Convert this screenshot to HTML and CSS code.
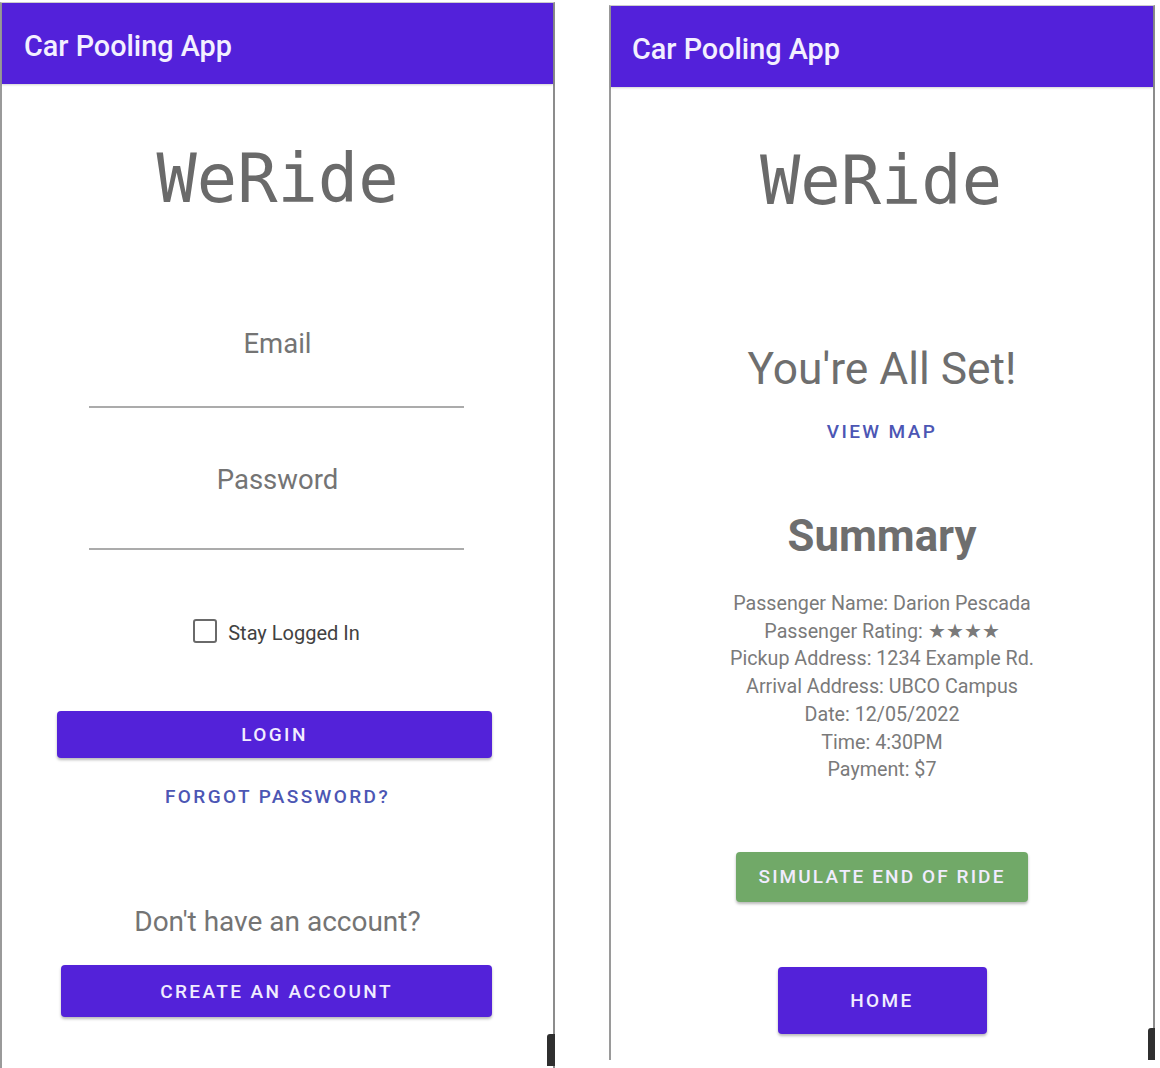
FILE: index.html
```html
<!DOCTYPE html>
<html lang="en">
<head>
<meta charset="utf-8">
<title>WeRide</title>
<link rel="stylesheet" href="styles.css">
</head>
<body>
<div class="screens">
  <section class="phone phone-login">
    <header class="appbar">Car Pooling App</header>
    <div class="logo">WeRide</div>
    <div class="hint hint-email">Email</div>
    <div class="underline underline-email"></div>
    <div class="hint hint-password">Password</div>
    <div class="underline underline-password"></div>
    <label class="stay">
      <span class="checkbox"></span>
      <span class="stay-text">Stay Logged In</span>
    </label>
    <div class="btn btn-login">LOGIN</div>
    <div class="text-btn forgot">FORGOT PASSWORD?</div>
    <div class="question">Don't have an account?</div>
    <div class="btn btn-create">CREATE AN ACCOUNT</div>
    <div class="scroll-thumb thumb-left"></div>
  </section>

  <section class="phone phone-summary">
    <header class="appbar">Car Pooling App</header>
    <div class="logo logo-right">WeRide</div>
    <div class="all-set">You're All Set!</div>
    <div class="text-btn view-map">VIEW MAP</div>
    <div class="summary-title">Summary</div>
    <div class="summary-lines">
      <div>Passenger Name: Darion Pescada</div>
      <div>Passenger Rating: ★★★★</div>
      <div>Pickup Address: 1234 Example Rd.</div>
      <div>Arrival Address: UBCO Campus</div>
      <div>Date: 12/05/2022</div>
      <div>Time: 4:30PM</div>
      <div>Payment: $7</div>
    </div>
    <div class="btn btn-sim">SIMULATE END OF RIDE</div>
    <div class="btn btn-home">HOME</div>
    <div class="scroll-thumb thumb-right"></div>
  </section>
</div>
</body>
</html>
```

FILE: styles.css
```css
* { box-sizing: border-box; }

html, body {
  margin: 0;
  padding: 0;
  background: #ffffff;
  overflow: hidden;
}

body {
  font-family: Roboto, "Liberation Sans", sans-serif;
  width: 1160px;
  height: 1068px;
}

.screens {
  display: flex;
  align-items: flex-start;
}

.phone {
  position: relative;
  background: #fff;
  border-left: 2px solid #9a9a9a;
  border-right: 2px solid #8c8c8c;
  border-top: 1px solid #cfcfcf;
}

.phone-login {
  width: 555px;
  height: 1066px;
  margin-top: 2px;
}

.phone-summary {
  width: 546px;
  height: 1055px;
  margin-top: 5px;
  margin-left: 54px;
}

.appbar {
  height: 81px;
  background: #5321da;
  color: #f3f0ff;
  font-size: 28.8px;
  font-weight: 500;
  line-height: 32px;
  padding: 27px 0 0 22px;
  box-shadow: 0 1px 2px rgba(0,0,0,0.18);
}

.phone-summary .appbar { padding-left: 21px; }

.logo {
  font-family: "DejaVu Sans Mono", "Liberation Mono", monospace;
  font-size: 67px;
  line-height: 66px;
  color: #6a6a6a;
  text-align: center;
  margin-top: 62px;
}

.logo-right { margin-top: 61px; margin-right: 2px; }

.hint {
  font-size: 27.5px;
  line-height: 32px;
  color: #747474;
  text-align: center;
}

.hint-email { margin-top: 116px; }
.hint-password { margin-top: 56px; }

.underline {
  width: 375px;
  margin-left: 87px;
  border-top: 2px solid #ababab;
}

.underline-email { margin-top: 46px; }
.underline-password { margin-top: 52px; }

.stay {
  display: flex;
  align-items: center;
  justify-content: center;
  gap: 11px;
  height: 24px;
  margin-top: 69px;
  margin-left: -2px;
}

.checkbox {
  width: 24px;
  height: 24px;
  border: 2px solid #6a6a6a;
  border-radius: 3px;
}

.stay-text {
  font-size: 20px;
  line-height: 24px;
  color: #424242;
  position: relative;
  top: 2px;
}

.btn {
  display: flex;
  align-items: center;
  justify-content: center;
  background: #5322d9;
  color: #f1ecff;
  font-size: 19px;
  font-weight: 500;
  letter-spacing: 2.4px;
  border-radius: 4px;
  box-shadow: 0 2px 3px rgba(0,0,0,0.28);
}

.btn-login {
  width: 435px;
  height: 47px;
  margin-top: 68px;
  margin-left: 55px;
}

.text-btn {
  font-size: 19px;
  font-weight: 500;
  line-height: 24px;
  letter-spacing: 2.4px;
  color: #4c56b4;
  text-align: center;
}

.forgot { margin-top: 27px; }

.question {
  font-size: 28px;
  line-height: 32px;
  color: #747474;
  text-align: center;
  margin-top: 97px;
}

.btn-create {
  width: 431px;
  height: 52px;
  margin-top: 27px;
  margin-left: 59px;
}

.all-set {
  font-size: 44.3px;
  line-height: 50px;
  color: #6e6e6e;
  text-align: center;
  margin-top: 130px;
}

.view-map { margin-top: 26px; }

.summary-title {
  font-size: 43.7px;
  font-weight: 700;
  line-height: 50px;
  color: #6e6e6e;
  text-align: center;
  margin-top: 67px;
}

.summary-lines {
  font-size: 19.7px;
  line-height: 27.7px;
  color: #7a7a7a;
  text-align: center;
  margin-top: 29px;
}

.btn-sim {
  background: #71a968;
  width: 292px;
  height: 50px;
  letter-spacing: 2.1px;
  margin: 68px auto 0;
}

.btn-home {
  width: 209px;
  height: 67px;
  margin: 65px auto 0;
}

.scroll-thumb {
  position: absolute;
  width: 8px;
  height: 32px;
  background: #2f2f2f;
  border-radius: 3px 0 0 0;
}

.thumb-left { right: -2px; bottom: 2px; }
.thumb-right { right: -2px; bottom: 0; width: 7px; }
```
